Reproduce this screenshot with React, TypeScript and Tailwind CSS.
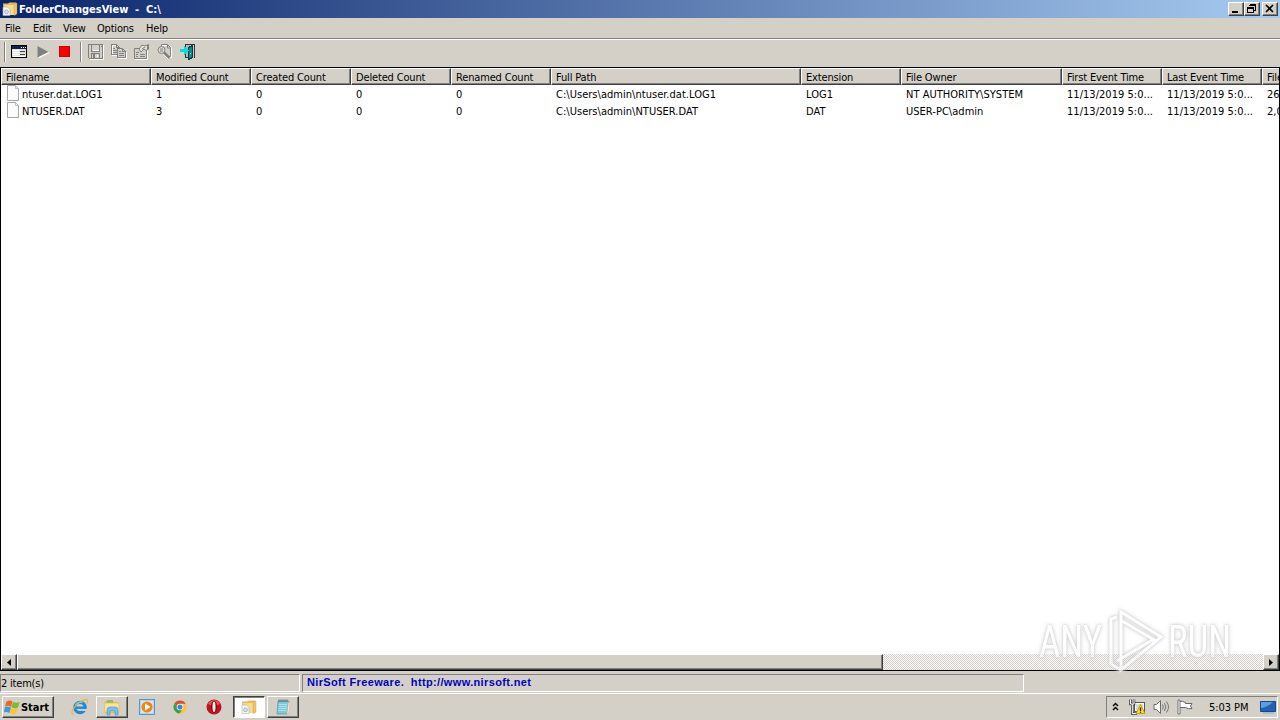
import React from 'react';

const columns = [
  { label: 'Filename', cell: 'w-[150px]' },
  { label: 'Modified Count', cell: 'w-[100px]' },
  { label: 'Created Count', cell: 'w-[100px]' },
  { label: 'Deleted Count', cell: 'w-[100px]' },
  { label: 'Renamed Count', cell: 'w-[100px]' },
  { label: 'Full Path', cell: 'w-[250px]' },
  { label: 'Extension', cell: 'w-[100px]' },
  { label: 'File Owner', cell: 'w-[161px]' },
  { label: 'First Event Time', cell: 'w-[100px]' },
  { label: 'Last Event Time', cell: 'w-[100px]' },
  { label: 'File Size', cell: 'w-[100px]' },
];

const rows = [
  ['ntuser.dat.LOG1', '1', '0', '0', '0', 'C:\\Users\\admin\\ntuser.dat.LOG1', 'LOG1', 'NT AUTHORITY\\SYSTEM', '11/13/2019 5:0...', '11/13/2019 5:0...', '262,144'],
  ['NTUSER.DAT', '3', '0', '0', '0', 'C:\\Users\\admin\\NTUSER.DAT', 'DAT', 'USER-PC\\admin', '11/13/2019 5:0...', '11/13/2019 5:0...', '2,097,152'],
];

const raised = 'bg-[#d4d0c8] border border-t-white border-l-white border-r-[#404040] border-b-[#404040] shadow-[inset_-1px_-1px_0_#808080]';

type IconProps = { className?: string };

const FolderIcon = ({ className = '' }: IconProps) => (
  <svg viewBox="0 0 16 16" className={`h-4 w-4 shrink-0 ${className}`}>
    <path d="M1 2.500H6L7.500 1.500H14V14H2Z" fill="#e6b954" />
    <path d="M2 4H13V14H3Z" fill="#f6dc90" />
    <path d="M12 3L15 2V13L12 14.500Z" fill="#eac66c" stroke="#c99b3d" strokeWidth=".4" />
    <path d="M1 6H5.500L8 8.500V14.500H1Z" fill="#f6f7f8" stroke="#aab0b6" strokeWidth=".6" />
    <circle cx="4.500" cy="10.800" r="1.900" fill="#dce5ed" stroke="#8d9baa" strokeWidth=".7" />
  </svg>
);

const FileIcon = () => (
  <svg viewBox="0 0 14 16" className="h-4 w-3.5 shrink-0">
    <path d="M1.500 .5 H9.500 L12.500 3.500 V15.500 H1.500Z" fill="#fcfcfc" stroke="#a5a5a5" />
    <path d="M9.500 .5 V3.500 H12.500" fill="#e8e8e8" stroke="#b5b5b5" strokeWidth=".8" />
  </svg>
);

const OptionsIcon = () => (
  <svg viewBox="0 0 16 14" className="h-3.5 w-4" shapeRendering="crispEdges">
    <rect x=".5" y=".5" width="15" height="12" fill="#e4e1da" stroke="#000" />
    <rect x="1" y="1" width="14" height="3" fill="#15204c" />
    <path d="M10 2.500h1M12 2.500h1M14 2.500h1" stroke="#fff" />
    <path d="M2 5.500h6M2 7.500h6M2 9.500h6M2 11.500h12" stroke="#fff" />
    <path d="M9 6.500h5M9 9.500h5" stroke="#444" />
  </svg>
);

const SaveIcon = () => (
  <svg viewBox="0 0 16 16" className="h-4 w-4" shapeRendering="crispEdges">
    <path d="M1.500 1.500H15.500V15.500H2.500L1.500 14.500Z" fill="none" stroke="#fff" />
    <path d="M.5 .5H14.500V14.500H1.500L.5 13.500Z" fill="#d4d0c8" stroke="#808080" />
    <path d="M3.500 1V7.500H11.500V1M3.500 14V9.500H11.500V14M5 10V14M6 10V14M13 2V3" fill="none" stroke="#808080" />
    <path d="M4.500 6.500H10.500M9.500 10.500V13" stroke="#fff" />
  </svg>
);

const CopyIcon = () => (
  <svg viewBox="0 0 16 16" className="h-4 w-4" shapeRendering="crispEdges">
    <path d="M1.500 1.500H6.500L9.500 4.500V11.500H1.500Z" fill="#d4d0c8" stroke="#fff" />
    <path d="M.5 .5H5.500L8.500 3.500V10.500H.5ZM5.500 .5V3.500H8M2 4.500H4M2 6.500H6M2 8.500H6" fill="none" stroke="#808080" />
    <path d="M7.500 5.500H12.500L15.500 8.500V14.500H7.500Z" fill="#d4d0c8" stroke="#fff" />
    <path d="M6.500 4.500H11.500L14.500 7.500V13.500H6.500ZM11.500 4.500V7.500H14M8 7.500H10M8 9.500H13M8 11.500H13" fill="#d4d0c8" stroke="#808080" />
  </svg>
);

const PropertiesIcon = () => (
  <svg viewBox="0 0 16 16" className="h-4 w-4">
    <path d="M1.500 5.500H13.500V15.500H1.500Z" fill="none" stroke="#fff" />
    <path d="M.5 4.500H12.500V14.500H.5Z" fill="#d4d0c8" stroke="#808080" />
    <path d="M5 5 L8 1 L11 2 L14.500 .5 V5 L12 6.500 L10 5 L7 8Z" fill="#e4e1da" stroke="#808080" />
    <path d="M2 8.500H5M2 10.500H4M6 10.500H11M2 12.500H4M6 12.500H11M8 5L11 3M13.500 1V6" stroke="#808080" />
  </svg>
);

const FindIcon = () => (
  <svg viewBox="0 0 16 16" className="h-4 w-4">
    <path d="M5 1.500H12L14.500 4V13.500H9" fill="none" stroke="#fff" />
    <path d="M4.500 2V.5H10.500L13.500 3.500V12.500H10M10.500 1V4H13" fill="none" stroke="#808080" />
    <circle cx="4.500" cy="6" r="3.500" fill="#dedbd4" stroke="#808080" />
    <path d="M3 5H6M3 7H6" stroke="#808080" />
    <path d="M7 8.500L12.500 14" stroke="#808080" strokeWidth="2.500" />
    <path d="M6.500 10.500L11.500 15.500" stroke="#fff" strokeWidth=".8" />
  </svg>
);

const ExitIcon = () => (
  <svg viewBox="0 0 16 16" className="h-4 w-4" shapeRendering="crispEdges">
    <path d="M5.500 5V.5H14.500V13.500M5.500 10V13.500H8" fill="none" stroke="#333" />
    <path d="M6 1H10V13H6Z" fill="#b8b8b4" />
    <path d="M8.500 3.500L12.500 1.500V13.500L8.500 15.500Z" fill="#0b8b90" stroke="#093b40" />
    <path d="M0 5H4V2L9 6.500L4 11V8H0Z" fill="#00dede" />
    <path d="M10 9H11" stroke="#e0ff60" />
  </svg>
);

const WindowsFlag = () => (
  <svg viewBox="0 0 16 16" className="h-4 w-4 shrink-0">
    <path d="M2.500 2.500C5 1 7 1.500 8.500 2.500L7 8C5.500 6.500 3 6.500 1 7.500Z" fill="#ee652c" />
    <path d="M9 2.700C11 4 13 4 15.500 3L14 8.500C12 9.500 10 9.500 7.500 8.300Z" fill="#7cb936" />
    <path d="M.8 8.200C3 7.200 5 7.400 6.900 8.700L5.400 14C3.500 12.800 1.500 12.800 0 13.500Z" fill="#4198dd" />
    <path d="M7.300 9.200C9.500 10.200 11.500 10.200 13.800 9.200L12.200 14.500C10 15.500 8 15.300 5.800 14.300Z" fill="#f9c631" />
  </svg>
);

const IeIcon = () => (
  <svg viewBox="0 0 18 18" className="h-[18px] w-[18px]">
    <circle cx="9" cy="9.500" r="5.200" fill="none" stroke="#2189d5" strokeWidth="3.200" />
    <path d="M5 9.700H15" stroke="#2189d5" strokeWidth="2.400" />
    <path d="M11 11H17V13H11Z" fill="#d4d0c8" />
    <path d="M4.500 7C6 4.500 9 3.500 11.500 4.600" fill="none" stroke="#72c9f5" strokeWidth="1.300" />
    <path d="M3 16C-1 17 1 11 6 6.500C11 2 17 -.5 16.500 3C16.500 4 16 5 15.500 5.500" fill="none" stroke="#dcb64a" strokeWidth="1.100" />
  </svg>
);

const ExplorerIcon = () => (
  <svg viewBox="0 0 18 18" className="h-[18px] w-[18px]">
    <path d="M2 3H7L8 4H15V15H2Z" fill="#e4b957" />
    <path d="M4 2H10V5H4Z" fill="#8ebe65" />
    <path d="M1.500 5H16V14H1.500Z" fill="#f9e49d" stroke="#dab959" strokeWidth=".6" />
    <path d="M4 17V12Q4 9 7 9H12Q15 9 15 12V17H12V13H7V17Z" fill="#79bee5" stroke="#4b95c4" strokeWidth=".6" />
  </svg>
);

const PlayerIcon = () => (
  <svg viewBox="0 0 16 16" className="h-4 w-4">
    <rect x=".5" y=".5" width="15" height="15" fill="#aed4ef" stroke="#4d9bd2" />
    <rect x="2" y="2" width="12" height="12" fill="#d5e6f2" />
    <circle cx="8" cy="8" r="5.600" fill="#f58316" />
    <path d="M6 4.500L11.500 8L6 11.500Z" fill="#fff" />
  </svg>
);

const ChromeIcon = () => (
  <svg viewBox="0 0 16 16" className="h-3.5 w-3.5">
    <circle cx="8" cy="8" r="7.500" fill="#f6c933" />
    <path d="M8 8L1.500 4.300A7.500 7.500 0 0 1 14.500 4.300H8Z" fill="#df4a3a" />
    <path d="M8 8L1.500 4.300A7.500 7.500 0 0 0 7.500 15.500L11.300 9.500Z" fill="#35a056" />
    <circle cx="8" cy="8" r="3.700" fill="#fff" />
    <circle cx="8" cy="8" r="2.900" fill="#447fe0" />
  </svg>
);

const OperaIcon = () => (
  <svg viewBox="0 0 16 16" className="h-4 w-4">
    <circle cx="8" cy="8" r="7.500" fill="#c0141d" />
    <path d="M2 5A6.700 6.700 0 0 1 14 5Q8 8 2 5Z" fill="#dd5558" />
    <ellipse cx="8" cy="8" rx="3.100" ry="6.100" fill="#8f080c" />
    <ellipse cx="8" cy="8" rx="1.500" ry="5.200" fill="#f5f0ef" />
  </svg>
);

const NotepadIcon = () => (
  <svg viewBox="0 0 16 16" className="h-4 w-4">
    <path d="M3 2H14L12.500 15H2Z" fill="#80c7dc" stroke="#5398ae" strokeWidth=".7" />
    <path d="M13.500 3L15 4L13.500 15H12Z" fill="#fff5d8" stroke="#b8a77a" strokeWidth=".4" />
    <path d="M4 5.500H12M4 7.500H12M3.500 9.500H12M3.500 11.500H11.500" stroke="#b8e8ef" strokeWidth=".8" />
    <path d="M4 .5V3M6 .5V3M8 .5V3M10 .5V3M12 .5V3" stroke="#555" strokeWidth=".9" />
  </svg>
);

const NetworkIcon = () => (
  <svg viewBox="0 0 17 16" className="h-4 w-[17px]">
    <rect x="5.500" y="3.500" width="10" height="9" fill="#d8d8d5" stroke="#555" />
    <rect x="6.500" y="4.500" width="8" height="7" fill="none" stroke="#fff" strokeWidth=".8" />
    <path d="M1.500 .5V5H5V.5M3.300 5V14.500H8" fill="none" stroke="#444" strokeWidth="2.600" />
    <path d="M1.500 .5V5H5V.5M3.300 5V14.500H8" fill="none" stroke="#fff" />
    <path d="M11.500 5.500L16 14.500H7Z" fill="#ffd929" stroke="#b99700" strokeWidth=".8" />
    <path d="M11.500 8.500V12M11.500 12.700V13.700" stroke="#292000" strokeWidth="1.300" />
  </svg>
);

const VolumeIcon = () => (
  <svg viewBox="0 0 17 16" className="h-4 w-[17px]">
    <path d="M1 5.500H3.500L7.500 1.500V14.500L3.500 10.500H1Z" fill="#fff" stroke="#6c6c6c" />
    <path d="M9.500 5.500Q11 8 9.500 10.500M11.500 4Q14 8 11.500 12M13.500 2.500Q17.500 8 13.500 13.500" fill="none" stroke="#777" />
  </svg>
);

const FlagIcon = () => (
  <svg viewBox="0 0 16 16" className="h-4 w-4">
    <path d="M2.500 2.500Q5 1.500 8.500 3.500V4.500H15L13.500 7L15 9.500Q11 10.500 8.500 8.500H2.500Z" fill="#fff" stroke="#666" />
    <path d="M1 1H3V15H1Z" fill="#fff" stroke="#666" strokeWidth=".9" />
  </svg>
);

const DesktopIcon = () => (
  <svg viewBox="0 0 16 15" className="h-[15px] w-4">
    <path d="M.5 1.500H15.500V11.500H.5Z" fill="#2460b4" stroke="#17488c" />
    <path d="M1 2H13Q8 7 1 8Z" fill="#5e9fe0" />
    <path d="M3 13H14" stroke="#9db4cf" strokeWidth="1.500" />
  </svg>
);

// vertical grip at the start of a rebar band
const Grip = () => <div className="h-5 w-[2px] border-l border-l-[#808080] border-r border-r-white" />;

const TitleBar = () => (
  <div className="flex h-[18px] items-center bg-linear-to-r/srgb from-[#0a246a] to-[#a6caf0] pl-0.5 pr-0.5">
    <FolderIcon />
    <span className="ml-px flex-1 pt-px text-[11px] font-bold tracking-[-0.02px] text-white">FolderChangesView&nbsp; -&nbsp; C:\</span>
    <div className={`flex h-3.5 w-4 items-center justify-center ${raised}`}>
      <svg viewBox="0 0 14 12" className="h-3 w-3.5" shapeRendering="crispEdges"><path d="M3 8H9V10H3Z" /></svg>
    </div>
    <div className={`flex h-3.5 w-4 items-center justify-center ${raised}`}>
      <svg viewBox="0 0 14 12" className="h-3 w-3.5" shapeRendering="crispEdges">
        <path d="M4.500 1.500H10.500V7.500H8.500M4 2H11M2.500 4.500H8.500V9.500H2.500ZM2 5H9" fill="none" stroke="#000" />
      </svg>
    </div>
    <div className={`ml-0.5 flex h-3.5 w-4 items-center justify-center ${raised}`}>
      <svg viewBox="0 0 14 12" className="h-3 w-3.5"><path d="M3 2L10 9M10 2L3 9" stroke="#000" strokeWidth="1.600" /></svg>
    </div>
  </div>
);

const MenuBar = () => (
  <div className="flex h-[21px] items-center border-b border-b-[#808080] pl-[5px] pt-px">
    <span className="w-7">File</span>
    <span className="w-[30px]">Edit</span>
    <span className="w-[34px]">View</span>
    <span className="w-[49px]">Options</span>
    <span>Help</span>
  </div>
);

const Toolbar = () => (
  <div className="flex h-7 items-center border-t border-t-white pb-1 pl-1">
    <Grip />
    <div className="ml-[5px] flex w-[23px]"><OptionsIcon /></div>
    <div className="w-[25px]">
      <svg viewBox="0 0 13 12" className="ml-[3px] h-3 w-[13px]">
        <path d="M1.500 1L12.500 7L1.500 12.500Z" fill="#fff" />
        <path d="M.5 0L11.500 6L.5 11.500Z" fill="#808080" />
      </svg>
    </div>
    <div className="h-[11px] w-[11px] border border-[#c00808] bg-[#ff0000]" />
    <div className="ml-[10px]"><Grip /></div>
    <div className="ml-1.5 flex gap-[7px]">
      <SaveIcon /><CopyIcon /><PropertiesIcon /><FindIcon /><ExitIcon />
    </div>
  </div>
);

const FileList = () => (
  <div className="flex flex-1 flex-col overflow-hidden border border-black bg-white">
    <div className="flex h-[17px] shrink-0">
      {columns.map((c) => (
        <div
          key={c.label}
          className={`${c.cell} h-[17px] shrink-0 whitespace-nowrap border border-t-white border-l-white border-r-[#404040] border-b-[#404040] bg-[#d4d0c8] pl-1 leading-[18px] tracking-[-0.16px] shadow-[inset_-1px_-1px_0_#808080]`}
        >
          {c.label}
        </div>
      ))}
    </div>
    <div className="flex-1">
      {rows.map((row) => (
        <div key={row[0]} className="flex h-[17px] leading-[20px] tracking-[0.03px]">
          {row.map((value, i) => (
            <div key={columns[i].label} className={`${columns[i].cell} flex shrink-0 whitespace-nowrap pl-[5px]`}>
              {i === 0 && <div className="w-4"><FileIcon /></div>}
              {value}
            </div>
          ))}
        </div>
      ))}
    </div>
    <div className="flex h-4 shrink-0 bg-[repeating-conic-gradient(#d4d0c8_0_25%,#ffffff_0_50%)] bg-[length:2px_2px]">
      <div className={`flex w-4 items-center justify-center ${raised}`}>
        <svg viewBox="0 0 4 7" className="h-[7px] w-1"><path d="M4 0V7L0 3.500Z" /></svg>
      </div>
      <div className={`w-[866px] ${raised}`} />
      <div className="flex-1" />
      <div className={`flex w-4 items-center justify-center ${raised}`}>
        <svg viewBox="0 0 4 7" className="h-[7px] w-1"><path d="M0 0V7L4 3.500Z" /></svg>
      </div>
    </div>
  </div>
);

const StatusBar = () => (
  <div className="flex h-[22px] gap-0.5 pt-[3px]">
    <div className="h-[18px] w-[300px] border border-t-[#808080] border-l-[#808080] border-r-white border-b-white leading-[17px]">2 item(s)</div>
    <div className="h-[18px] w-[722px] border border-t-[#808080] border-l-[#808080] border-r-white border-b-white pl-1 font-['Liberation_Sans',sans-serif] font-bold leading-[15px] tracking-[0.35px] text-[#0000c8]">
      NirSoft Freeware.&nbsp; http://www.nirsoft.net
    </div>
  </div>
);

const Taskbar = () => (
  <div className="flex h-[27px] items-center border-t border-t-white bg-[#d4d0c8] pl-0.5 pr-0.5">
    <div className={`flex h-[22px] w-[52px] items-center pl-px text-[11px] font-bold tracking-[-0.05px] ${raised}`}>
      <WindowsFlag />
      <span className="ml-px pt-px">Start</span>
    </div>
    <div className="ml-[17px] flex w-[25px]"><IeIcon /></div>
    <div className={`flex h-[22px] w-8 items-center justify-center ${raised}`}><ExplorerIcon /></div>
    <div className="ml-[11px]"><PlayerIcon /></div>
    <div className="ml-[18px]"><ChromeIcon /></div>
    <div className="ml-[19px]"><OperaIcon /></div>
    <div className="ml-[11px] flex h-[22px] w-8 items-center justify-center border border-t-[#404040] border-l-[#404040] border-r-white border-b-white bg-white shadow-[inset_1px_1px_0_#808080]">
      <FolderIcon />
    </div>
    <div className={`ml-0.5 flex h-[22px] w-8 items-center justify-center ${raised}`}><NotepadIcon /></div>
    <div className="ml-auto flex h-[22px] w-[172px] items-center border border-t-[#808080] border-l-[#808080] border-r-white border-b-white">
      <svg viewBox="0 0 7 9" className="ml-[5px] mb-0.5 h-[9px] w-[7px]">
        <path d="M1 4L3.500 1.500L6 4M1 8L3.500 5.500L6 8" fill="none" stroke="#000" strokeWidth="1.400" />
      </svg>
      <div className="ml-[10px]"><NetworkIcon /></div>
      <div className="ml-[7px]"><VolumeIcon /></div>
      <div className="ml-[7px]"><FlagIcon /></div>
      <span className="ml-[16px] w-[51px] whitespace-nowrap pt-px tracking-[-0.05px]">5:03 PM</span>
      <DesktopIcon />
    </div>
  </div>
);

const Watermark = () => (
  <div className="pointer-events-none absolute left-[1039px] top-[608px] flex h-[66px] w-[196px] items-center font-['Roboto'] text-[45px] leading-none tracking-normal text-white opacity-80 [filter:drop-shadow(0_0_1px_#c4c4c4)_drop-shadow(0_0_2px_#d0d0d0)]">
    <span className="w-[68px] origin-left scale-x-[0.82]">ANY</span>
    <svg viewBox="0 0 58 64" className="h-16 w-[58px] shrink-0" fill="none" stroke="#fff" strokeWidth="3">
      <path d="M14 3L54 28L14 61Z" />
      <path d="M10 8L4 10V55L14 61M15 12L49 32M10 52L47 30" />
    </svg>
    <span className="ml-[3px] w-[64px] origin-left scale-x-[0.82]">RUN</span>
  </div>
);

export default function App() {
  return (
    <div className="relative flex h-[720px] w-[1280px] flex-col overflow-hidden bg-[#d4d0c8] font-['DejaVu_Sans_Condensed','DejaVu_Sans',sans-serif] text-[11px] leading-[14px] tracking-[-0.2px] text-black [font-stretch:condensed]">
      <TitleBar />
      <MenuBar />
      <Toolbar />
      <FileList />
      <StatusBar />
      <Taskbar />
      <Watermark />
    </div>
  );
}
